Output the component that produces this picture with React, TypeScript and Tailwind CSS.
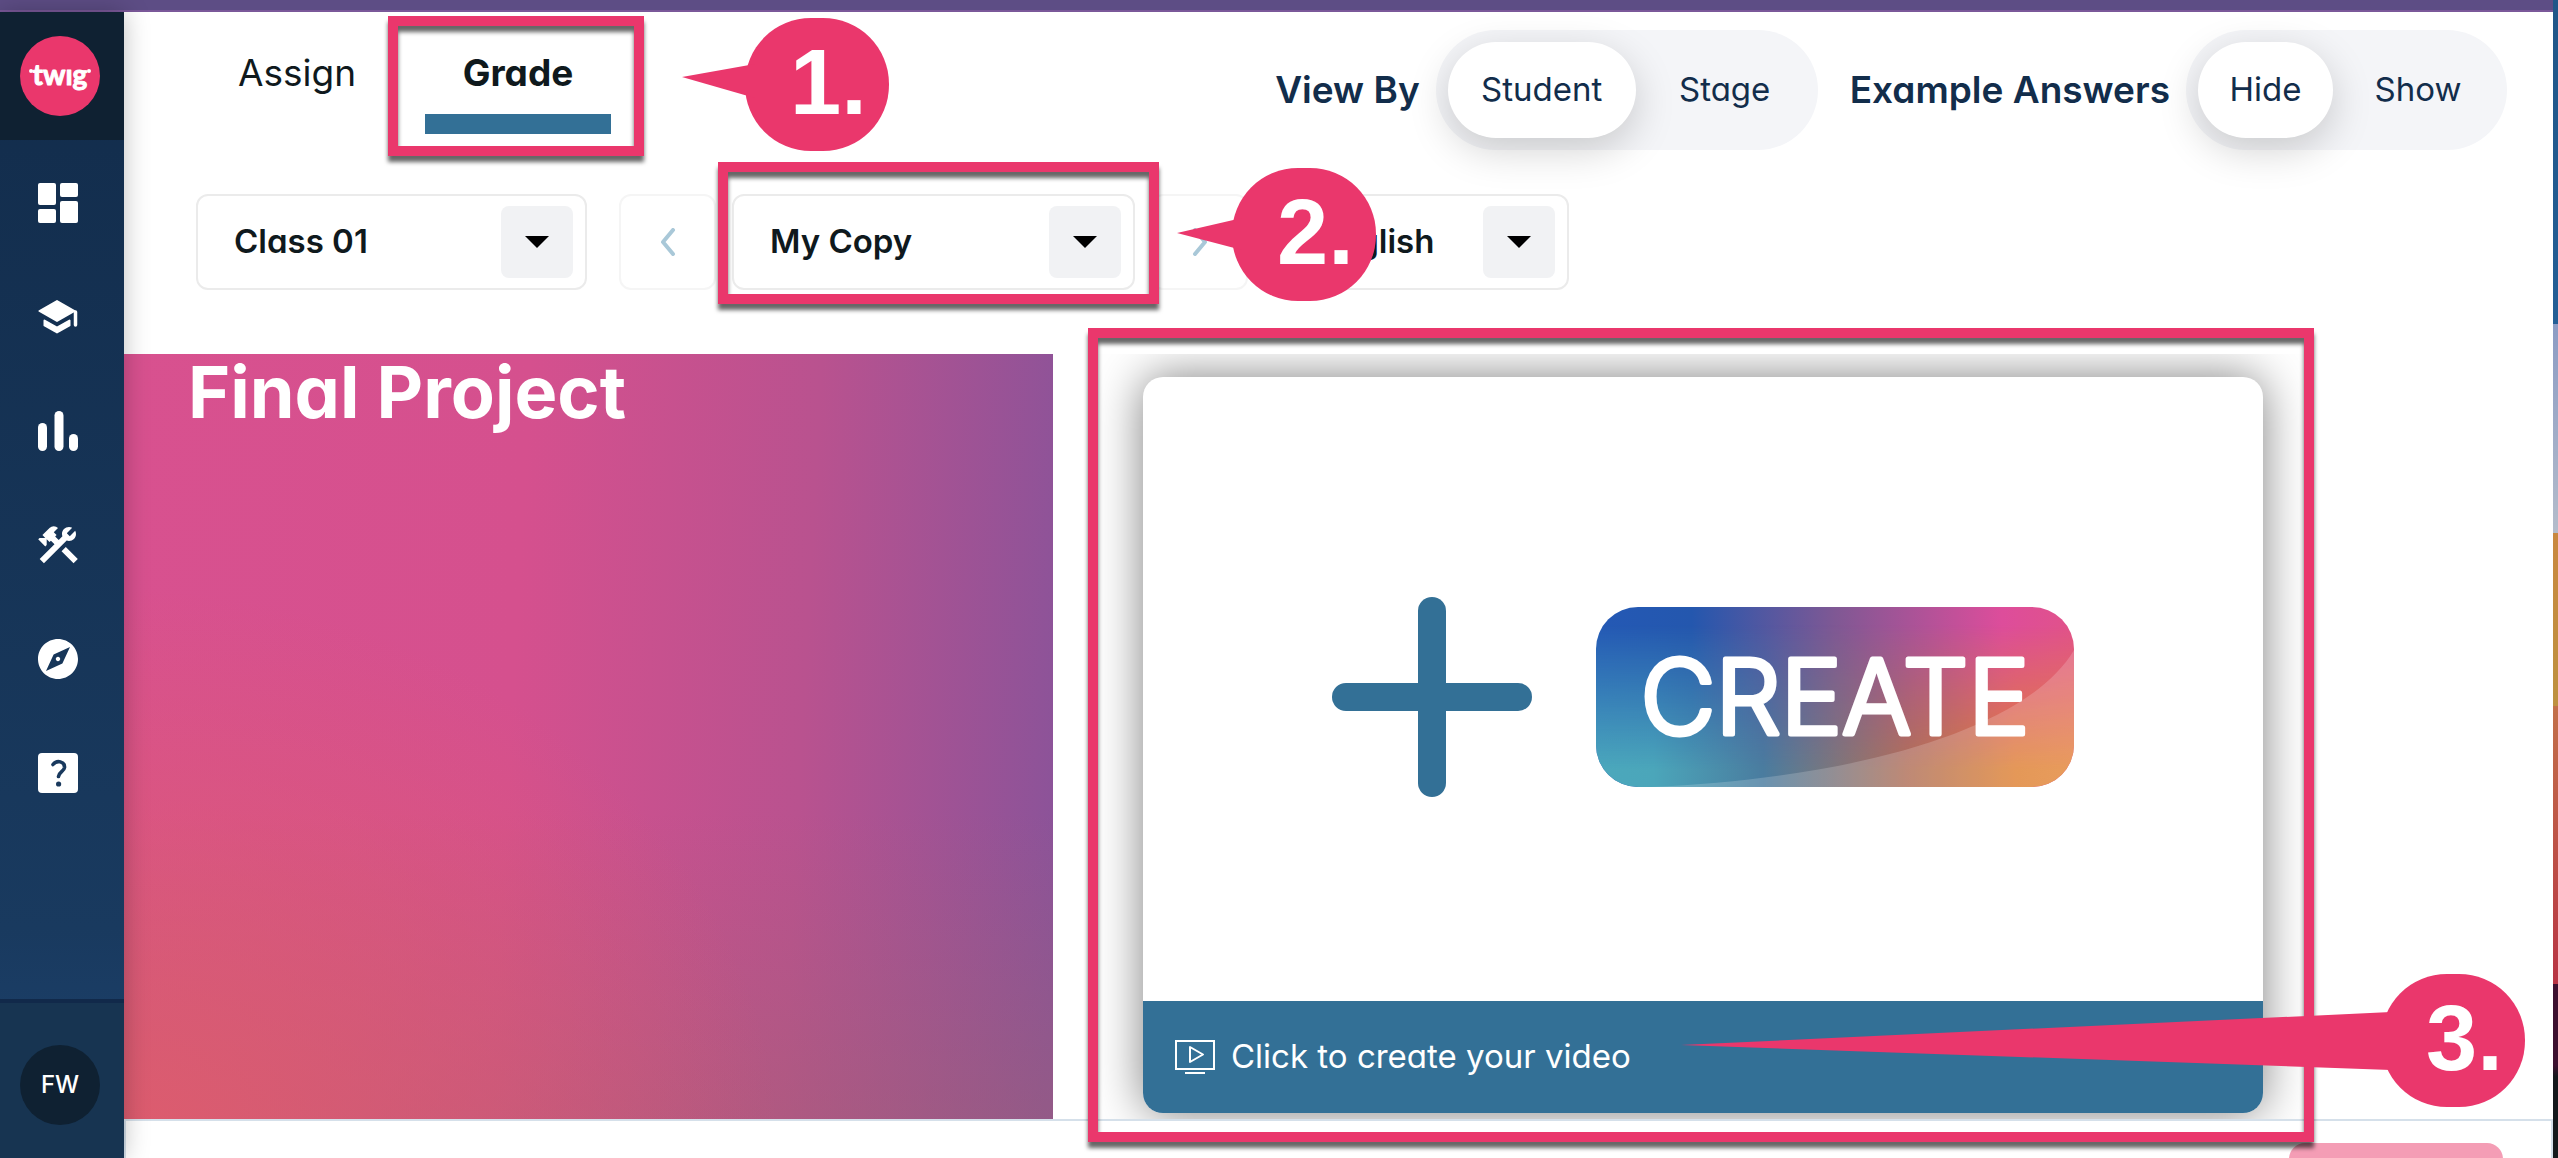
import { useState } from "react";
import type { ReactNode } from "react";
import { MdConstruction, MdExplore } from "react-icons/md";

function TwigLogo() {
  return (
    <svg viewBox="0 0 80 80" className="h-20 w-20" role="img" aria-label="twig">
      <circle cx="40" cy="40" r="40" fill="#ea376c" />
      <circle cx="11" cy="35" r="2" fill="#fff" />
      <circle cx="69" cy="35" r="2" fill="#fff" />
      <text
        x="40"
        y="49"
        textAnchor="middle"
        fill="#fff"
        stroke="#fff"
        strokeWidth="1"
        strokeLinejoin="round"
        fontFamily="Lato, sans-serif"
        fontSize="28"
        fontWeight="700"
      >
        twıg
      </text>
    </svg>
  );
}

function DashboardIcon() {
  return (
    <svg viewBox="0 0 40 40" className="h-10 w-10" fill="#fff">
      <rect x="0" y="0" width="18" height="22" rx="2" />
      <rect x="22" y="0" width="18" height="14" rx="2" />
      <rect x="0" y="26" width="18" height="14" rx="2" />
      <rect x="22" y="18" width="18" height="22" rx="2" />
    </svg>
  );
}

function SchoolIcon() {
  return (
    <svg viewBox="0 0 40 34" className="h-[34px] w-10" fill="#fff" stroke="#fff" strokeWidth="2" strokeLinejoin="round" strokeLinecap="round">
      <path d="M19 1 1.500 11 19 21 36.500 11Z" />
      <path d="M6.500 20.500 19 27.500 31.500 20.500V25.500L19 32.500 6.500 25.500Z" />
      <path d="M37.500 12V25" strokeWidth="3.500" />
    </svg>
  );
}

function BarsIcon() {
  return (
    <svg viewBox="0 0 40 40" className="h-10 w-10" fill="#fff">
      <rect x="0" y="12" width="9" height="28" rx="4.500" />
      <rect x="16.500" y="0" width="9" height="40" rx="4.500" />
      <rect x="31" y="23" width="9" height="17" rx="4.500" />
    </svg>
  );
}

function HelpIcon() {
  return (
    <svg viewBox="0 0 40 40" className="h-10 w-10" fill="none">
      <rect width="40" height="40" rx="4" fill="#fff" />
      <path d="M15 11.500C19 6.500 27 8.500 26.500 14.500C26 18.500 21 19 20.500 23.500" stroke="#19395d" strokeWidth="3.600" strokeLinecap="round" />
      <circle cx="20.600" cy="31" r="2.600" fill="#19395d" />
    </svg>
  );
}

const navItems: { label: string; icon: ReactNode }[] = [
  { label: "Dashboard", icon: <DashboardIcon /> },
  { label: "Classes", icon: <SchoolIcon /> },
  { label: "Reports", icon: <BarsIcon /> },
  { label: "Tools", icon: <MdConstruction className="h-12 w-12" /> },
  { label: "Explore", icon: <MdExplore className="h-12 w-12" /> },
  { label: "Help", icon: <HelpIcon /> },
];

function Sidebar() {
  return (
    <aside className="relative z-20 flex w-[124px] shrink-0 flex-col bg-linear-to-b from-[#122c4b] via-[#193a5f] via-80% to-[#1d426f] text-white shadow-[0_0_24px_rgba(0,0,0,0.25)]">
      <a href="#home" className="flex h-32 shrink-0 items-center bg-[#0f2132] pl-5">
        <TwigLogo />
      </a>
      <nav className="flex flex-1 flex-col pt-1.5">
        {navItems.map((item) => (
          <a key={item.label} href={"#" + item.label.toLowerCase()} aria-label={item.label} className="flex h-[114px] items-center justify-center pr-2">
            {item.icon}
          </a>
        ))}
      </nav>
      <div className="flex h-[159px] shrink-0 items-center border-t-4 border-[#11294a] bg-[#173451] pt-2 pl-5">
        <button className="flex h-20 w-20 items-center justify-center rounded-full bg-[#0f2132] text-2xl font-medium">FW</button>
      </div>
    </aside>
  );
}

// pink numbered bubble with a pointer on its left side
function Callout({ width, tip, base, children }: { width: number; tip: number; base: [number, number]; children: ReactNode }) {
  const left = width - 144;
  return (
    <svg width={width} height="133" viewBox={`0 0 ${width} 133`} className="block">
      <rect x={left} y="0" width="144" height="133" rx="66" fill="#ea376c" />
      <polygon points={`0,${tip} ${left + 10},${base[0]} ${left + 10},${base[1]}`} fill="#ea376c" />
      <text x={left + 45} y="96" fill="#fff" fontFamily="Liberation Sans, Arial, sans-serif" fontSize="92" fontWeight="700">
        {children}
      </text>
    </svg>
  );
}

function Dropdown({ label, options, className }: { label: string; options: string[]; className: string }) {
  return (
    <div className={`flex h-24 items-center rounded-xl border-2 border-[#ebebeb] bg-white pr-3 ${className}`}>
      <select aria-label={label} className="h-full min-w-0 flex-1 appearance-none bg-transparent pl-9 text-[33px] font-semibold text-[#0f191d] outline-none">
        {options.map((o) => (
          <option key={o}>{o}</option>
        ))}
      </select>
      <span className="pointer-events-none flex h-[72px] w-[72px] shrink-0 items-center justify-center rounded-lg bg-[#f1f2f4]">
        <svg viewBox="0 0 24 12" className="h-3 w-6">
          <path d="M0 0H24L12 12Z" fill="#000" />
        </svg>
      </span>
    </div>
  );
}

function StepButton({ label, path }: { label: string; path: string }) {
  return (
    <button aria-label={label} className="flex h-24 w-[97px] shrink-0 items-center justify-center rounded-xl border-2 border-[#f5f5f5]">
      <svg viewBox="0 0 16 28" className="h-7 w-4" fill="none" stroke="#a9c8d8" strokeWidth="4" strokeLinecap="round" strokeLinejoin="round">
        <path d={path} />
      </svg>
    </button>
  );
}

function Toggle({ label, options, widths }: { label: string; options: string[]; widths: string[] }) {
  const [active, setActive] = useState(options[0]);
  return (
    <div role="group" aria-label={label} className="flex items-center gap-4 text-[#122d4b]">
      <span className="text-[37px] font-semibold whitespace-nowrap">{label}</span>
      <div className="flex h-[120px] items-center rounded-full bg-[#f4f5f8] px-3">
        {options.map((o, i) => (
          <button
            key={o}
            aria-pressed={active === o}
            onClick={() => setActive(o)}
            className={`h-24 rounded-full text-[33px] ${widths[i]} ${active === o ? "bg-white shadow-[0_12px_40px_rgba(0,0,0,0.18)]" : ""}`}
          >
            {o}
          </button>
        ))}
      </div>
    </div>
  );
}

function CreateBadge() {
  return (
    <svg viewBox="0 0 478 180" className="h-[180px] w-[478px] shrink-0">
      <defs>
        <linearGradient id="badgeTop">
          <stop offset="0" stopColor="#2459b5" />
          <stop offset="0.2" stopColor="#2457ae" />
          <stop offset="0.5" stopColor="#7f5894" />
          <stop offset="0.85" stopColor="#dd4d9b" />
          <stop offset="1" stopColor="#e1528a" />
        </linearGradient>
        <linearGradient id="badgeBottom">
          <stop offset="0" stopColor="#4ba8bc" />
          <stop offset="0.12" stopColor="#4ba6ba" />
          <stop offset="0.35" stopColor="#4a7c9f" />
          <stop offset="0.65" stopColor="#b07058" />
          <stop offset="0.88" stopColor="#df8234" />
          <stop offset="1" stopColor="#e38638" />
        </linearGradient>
        <linearGradient id="badgeFade" x2="0" y2="1">
          <stop offset="0.1" stopColor="#000" />
          <stop offset="0.9" stopColor="#fff" />
        </linearGradient>
        <mask id="badgeMask">
          <rect width="478" height="180" fill="url(#badgeFade)" />
        </mask>
        <clipPath id="badgeClip">
          <rect width="478" height="180" rx="42" />
        </clipPath>
      </defs>
      <g clipPath="url(#badgeClip)">
        <rect width="478" height="180" fill="url(#badgeTop)" />
        <rect width="478" height="180" fill="url(#badgeBottom)" mask="url(#badgeMask)" />
        <path d="M55 180C250 172 430 125 478 43V180Z" fill="#fff" opacity="0.18" />
      </g>
      <text
        x="239"
        y="127"
        textAnchor="middle"
        fill="#fff"
        stroke="#fff"
        strokeWidth="5"
        strokeLinejoin="round"
        fontFamily="Inter, sans-serif"
        fontSize="103"
        fontWeight="300"
      >
        CREATE
      </text>
    </svg>
  );
}

function VideoIcon() {
  return (
    <svg viewBox="0 0 40 34" className="h-[34px] w-10" fill="none" stroke="#fff" strokeWidth="2">
      <rect x="1" y="1" width="38" height="28" />
      <path d="M15 7V22L28 14.500Z" strokeLinejoin="round" />
      <path d="M10 33H30" />
    </svg>
  );
}

const highlight = "pointer-events-none absolute border-10 border-[#ea376c] drop-shadow-[0_6px_2px_rgba(0,0,0,0.6)]";

export default function App() {
  const [tab, setTab] = useState("Grade");
  const tabClass = (name: string) =>
    `w-[186px] border-b-20 pt-9 pb-4 text-[37px] leading-[50px] text-[#0f191d] ${tab === name ? "border-[#337096] font-bold" : "border-transparent"}`;

  return (
    <div className="flex h-screen flex-col overflow-hidden bg-white font-['Inter',sans-serif] [font-feature-settings:'cv11']">
      <div className="flex min-h-0 flex-1">
        <div className="flex min-w-0 flex-1 flex-col">
          <div className="h-3 shrink-0 border-b-2 border-[#7a5899] bg-[#5d4d85]" />
          <div className="flex min-h-0 flex-1">
            <Sidebar />

            <main className="flex min-w-0 flex-1 flex-col overflow-hidden">
              {/* Tabs and view toggles */}
              <div className="relative z-10 mb-11 flex shrink-0 items-start justify-between pr-[46px] pl-20">
                <div className="flex gap-8">
                  <button className={tabClass("Assign")} onClick={() => setTab("Assign")}>Assign</button>
                  <div className="relative pl-[3px]">
                    <button className={tabClass("Grade")} onClick={() => setTab("Grade")}>Grade</button>
                    <div className={`${highlight} top-1 -right-[33px] -bottom-[22px] -left-[34px]`} />
                    <div className="absolute top-1.5 left-[260px]">
                      <Callout width={207} tip={59} base={[46, 80]}>1.</Callout>
                    </div>
                  </div>
                </div>
                <div className="flex gap-8 pt-[18px]">
                  <Toggle label="View By" options={["Student", "Stage"]} widths={["w-[188px]", "w-[170px] pl-2"]} />
                  <Toggle label="Example Answers" options={["Hide", "Show"]} widths={["w-[135px]", "w-[162px] pl-2"]} />
                </div>
              </div>

              {/* Class, copy and language pickers */}
              <div className="relative z-10 mb-16 flex shrink-0 pl-[72px]">
                <Dropdown label="Class" options={["Class 01"]} className="mr-8 w-[391px]" />
                <StepButton label="Previous" path="M13 2 3 14 13 26" />
                <div className="relative z-10 mx-4">
                  <Dropdown label="Copy" options={["My Copy"]} className="w-[403px]" />
                  <div className={`${highlight} -top-8 -right-6 -bottom-3.5 -left-3.5`} />
                  <div className="absolute -top-[26px] left-[445px]">
                    <Callout width={199} tip={65} base={[50, 82]}>2.</Callout>
                  </div>
                </div>
                <StepButton label="Next" path="M3 2 13 14 3 26" />
                <Dropdown label="Language" options={["English"]} className="ml-8 w-[289px]" />
              </div>

              {/* Final project */}
              <section className="relative z-10 grid shrink-0 grid-cols-[929fr_1500fr]">
                <div className="bg-[radial-gradient(ellipse_at_0%_105%,#de5c6d_0%,#de5c6d00_50%),linear-gradient(to_top,#a0646c66_0%,#a0646c00_40%),linear-gradient(93deg,#d8518f_0%,#d5508e_42%,#b9528f_72%,#8b5399_99%)] pl-16">
                  <h1 className="text-7xl leading-[76px] font-bold text-white">Final Project</h1>
                </div>
                <div className="relative">
                  <div className="overflow-hidden pt-[23px] pr-[290px] pb-1.5 pl-[90px]">
                    <div className="overflow-hidden rounded-[20px] bg-white shadow-[0_0_48px_rgba(0,0,0,0.5)]">
                      <div className="flex items-center justify-center gap-16 pt-[220px] pb-[204px]">
                        <svg viewBox="0 0 200 200" className="h-[200px] w-[200px] shrink-0" fill="#337096">
                          <rect x="86" width="28" height="200" rx="14" />
                          <rect y="86" width="200" height="28" rx="14" />
                        </svg>
                        <CreateBadge />
                      </div>
                      <button className="flex h-28 w-full items-center gap-4 bg-[#337096] pl-8 text-[33px] text-white">
                        <VideoIcon />
                        Click to create your video
                      </button>
                    </div>
                  </div>
                  <div className={`${highlight} -top-[26px] right-[239px] -bottom-[23px] left-[35px]`} />
                  <div className="pointer-events-none absolute right-7 bottom-3">
                    <Callout width={844} tip={71} base={[38, 96]}>3.</Callout>
                  </div>
                </div>
              </section>

              <section className="flex min-h-0 flex-1 justify-end overflow-hidden border-2 border-b-0 border-[#d5e0ea] pt-[22px] pr-12">
                <button aria-label="Submit" className="h-20 w-[214px] rounded-2xl bg-[#f49db5]" />
              </section>
            </main>
          </div>
        </div>

        {/* Edge of the desktop behind the window */}
        <div className="w-[5px] shrink-0 bg-[linear-gradient(#205688_0%,#245f96_28%,#8c9cc4_28%,#b4bccb_46%,#c98840_46%,#bd9140_61%,#c2704a_61%,#b83444_85%,#3d1130_85%,#3d1130_92%,#14191c_93%)]" />
      </div>
    </div>
  );
}
